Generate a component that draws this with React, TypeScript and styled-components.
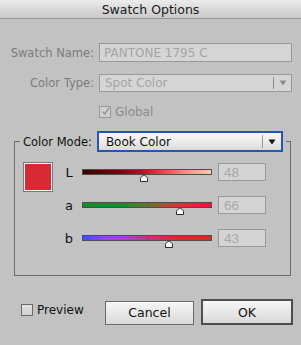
import React from "react";
import styled, { createGlobalStyle } from "styled-components";

const sliders = [
  {
    name: "L",
    value: 48,
    pos: 0.477,
    split: false,
    gradient:
      "linear-gradient(to right, #3a0008 0%, #7a0010 28%, #c4102a 48%, #f4404a 62%, #fc8a80 80%, #fcc8b4 100%)",
  },
  {
    name: "a",
    value: 66,
    pos: 0.755,
    split: true,
    gradient:
      "linear-gradient(to right, #188a2c 0%, #1e8a2c 30%, #5a7a2c 48%, #9a5a30 62%, #e02a3c 80%, #ff0a40 100%)",
  },
  {
    name: "b",
    value: 43,
    pos: 0.67,
    split: true,
    gradient:
      "linear-gradient(to right, #3850ff 0%, #9a40ff 18%, #b838c0 38%, #d02c70 55%, #dc2a30 72%, #d82a1c 100%)",
  },
];

function Thumb() {
  return (
    <svg width="10" height="8" viewBox="0 0 10 8">
      <path
        d="M1.5 7.5 L1.5 4.5 Q1.5 3.5 2.5 2.8 L5 0.8 L7.5 2.8 Q8.5 3.5 8.5 4.5 L8.5 7.5 Z"
        fill="#fafafa"
        stroke="#2a2a2a"
        strokeWidth="1"
      />
    </svg>
  );
}

function Arrow({ color }: { color: string }) {
  return (
    <svg width="8" height="6" viewBox="0 0 8 6">
      <path d="M0.5 0.5 L7.5 0.5 L4 5.5 Z" fill={color} />
    </svg>
  );
}

export default function App() {
  return (
    <>
      <GlobalStyle />
      <Window>
        <TitleBar>Swatch Options</TitleBar>
        <Form>
          <Label>Swatch Name:</Label>
          <TextField>PANTONE 1795 C</TextField>
          <Label>Color Type:</Label>
          <SelectField>
            <span>Spot Color</span>
            <SelectArrow $muted>
              <Arrow color="#8e8e8e" />
            </SelectArrow>
          </SelectField>
          <CheckRow>
            <CheckBox $disabled>
              <svg width="11" height="11" viewBox="0 0 11 11">
                <path
                  d="M2 5.5 L4.5 8.5 L10 1"
                  fill="none"
                  stroke="#8a8a8a"
                  strokeWidth="1.4"
                />
              </svg>
            </CheckBox>
            <CheckText $disabled>Global</CheckText>
          </CheckRow>
        </Form>

        <Group>
          <Legend>
            <LegendLabel>Color Mode:</LegendLabel>
            <ModeSelect>
              <span>Book Color</span>
              <SelectArrow>
                <Arrow color="#111" />
              </SelectArrow>
            </ModeSelect>
          </Legend>
          <GroupBody>
            <Swatch />
            <SliderList>
              {sliders.map((s) => (
                <SliderRow key={s.name}>
                  <ChannelName>{s.name}</ChannelName>
                  <Track style={{ background: s.gradient }}>
                    {s.split && <Split />}
                    <ThumbHolder style={{ left: `${s.pos * 100}%` }}>
                      <Thumb />
                    </ThumbHolder>
                  </Track>
                  <ValueField>{s.value}</ValueField>
                </SliderRow>
              ))}
            </SliderList>
          </GroupBody>
        </Group>

        <BottomBar>
          <PreviewToggle>
            <CheckBox />
            <CheckText>Preview</CheckText>
          </PreviewToggle>
          <Button>Cancel</Button>
          <Button $primary>OK</Button>
        </BottomBar>
      </Window>
    </>
  );
}

const GlobalStyle = createGlobalStyle`
  html, body {
    margin: 0;
    padding: 0;
    background: #c2c2c2;
  }
  * {
    box-sizing: border-box;
  }
`;

const Window = styled.div`
  width: 301px;
  height: 345px;
  background: #c2c2c2;
  font-family: "DejaVu Sans", "Liberation Sans", sans-serif;
  font-size: 11.5px;
  color: #111;
  display: flex;
  flex-direction: column;
  overflow: hidden;
`;

const TitleBar = styled.div`
  height: 19px;
  background: linear-gradient(to bottom, #ececec 0%, #d8d8d8 55%, #cacaca 100%);
  border-bottom: 1px solid #9a9a9a;
  display: flex;
  align-items: center;
  justify-content: center;
  font-size: 12.5px;
  color: #1a1a1a;
  padding-top: 1px;
`;

const Form = styled.div`
  display: grid;
  grid-template-columns: 94px 193px;
  column-gap: 5px;
  row-gap: 12px;
  padding-top: 24px;
  align-items: center;
`;

const Label = styled.div`
  text-align: right;
  color: #7c7c7c;
`;

const TextField = styled.div`
  height: 19px;
  border: 1px solid #999;
  background: #d5d5d5;
  color: #a4a4a4;
  padding-left: 4px;
  display: flex;
  align-items: center;
  font-size: 12px;
`;

const SelectField = styled(TextField)`
  height: 18px;
  justify-content: space-between;
  padding-left: 5px;
`;

const SelectArrow = styled.div<{ $muted?: boolean }>`
  width: ${(p) => (p.$muted ? "18px" : "19px")};
  border-left: 1px solid ${(p) => (p.$muted ? "#8a8a8a" : "#9a9a9a")};
  display: flex;
  align-items: center;
  justify-content: center;
  margin: ${(p) => (p.$muted ? "2px 0" : "3px 0")};
  height: ${(p) => (p.$muted ? "12px" : "13px")};
`;

const CheckRow = styled.div`
  grid-column: 2;
  display: flex;
  align-items: center;
  gap: 4px;
  margin-top: 1px;
`;

const CheckBox = styled.div<{ $disabled?: boolean }>`
  width: 12px;
  height: 12px;
  border: 1px solid ${(p) => (p.$disabled ? "#9a9a9a" : "#6a6a6a")};
  background: ${(p) =>
    p.$disabled ? "#cfcfcf" : "linear-gradient(to bottom, #e2e2e2, #cfcfcf)"};
  display: flex;
  align-items: center;
  justify-content: center;

  svg {
    margin-left: 1px;
    margin-top: -1px;
  }
`;

const CheckText = styled.span<{ $disabled?: boolean }>`
  color: ${(p) => (p.$disabled ? "#8a8a8a" : "#111")};
  font-size: 12px;
`;

const Group = styled.fieldset`
  margin: 12px 10px 0 14px;
  padding: 0;
  border: 1px solid #6c6c6c;
  min-inline-size: 0;
`;

const Legend = styled.legend`
  margin-left: 5px;
  padding: 0 3px;
  display: flex;
  align-items: center;
  gap: 5px;
`;

const LegendLabel = styled.span`
  color: #111;
  font-size: 11.5px;
`;

const ModeSelect = styled.div`
  width: 186px;
  height: 21px;
  border: 2px solid #2456b6;
  background: linear-gradient(to bottom, #fbfbfb 0%, #ececec 50%, #dadada 100%);
  display: flex;
  align-items: center;
  justify-content: space-between;
  padding-left: 7px;
  font-size: 12px;
  color: #111;
`;

const GroupBody = styled.div`
  display: flex;
  gap: 9px;
  padding: 10px 24px 28px 8px;
`;

const Swatch = styled.div`
  width: 30px;
  height: 30px;
  flex: none;
  border: 1px solid #7a7a7a;
  box-shadow: inset 0 0 0 1px #f4f4f4;
  background: #d82a35;
`;

const SliderList = styled.div`
  display: flex;
  flex-direction: column;
  gap: 15px;
  padding-top: 1px;
`;

const SliderRow = styled.div`
  display: grid;
  grid-template-columns: 14px 130px 48px;
  column-gap: 6px;
  align-items: center;
  height: 18px;
`;

const ChannelName = styled.span`
  text-align: center;
  font-size: 13px;
  color: #111;
`;

const Track = styled.div`
  position: relative;
  height: 6px;
  border: 1px solid #4e4e4e;
`;

const Split = styled.div`
  position: absolute;
  left: 50%;
  top: 0;
  bottom: 0;
  width: 1px;
  background: #5a5a5a;
`;

const ThumbHolder = styled.div`
  position: absolute;
  top: 4px;
  transform: translateX(-50%);
  line-height: 0;
`;

const ValueField = styled.div`
  height: 18px;
  border: 1px solid #9a9a9a;
  background: #d4d4d4;
  color: #a8a8a8;
  font-family: "Liberation Sans", Arial, sans-serif;
  font-size: 13.5px;
  padding-left: 5px;
  display: flex;
  align-items: center;
`;

const BottomBar = styled.div`
  display: flex;
  align-items: center;
  gap: 7px;
  margin-top: 23px;
  padding: 0 8px 0 21px;
`;

const PreviewToggle = styled.label`
  flex: 1;
  display: flex;
  align-items: center;
  gap: 4px;
  margin-bottom: 5px;
`;

const Button = styled.button<{ $primary?: boolean }>`
  width: ${(p) => (p.$primary ? "92px" : "89px")};
  height: ${(p) => (p.$primary ? "26px" : "24px")};
  border: ${(p) => (p.$primary ? "2px solid #4e4e4e" : "1px solid #6a6a6a")};
  background: linear-gradient(to bottom, #f6f6f6 0%, #e8e8e8 50%, #d8d8d8 100%);
  font-family: "DejaVu Sans", sans-serif;
  font-size: 12.5px;
  color: #111;
  padding: 0;
  border-radius: 0;
  margin-top: ${(p) => (p.$primary ? "0" : "1px")};
`;
